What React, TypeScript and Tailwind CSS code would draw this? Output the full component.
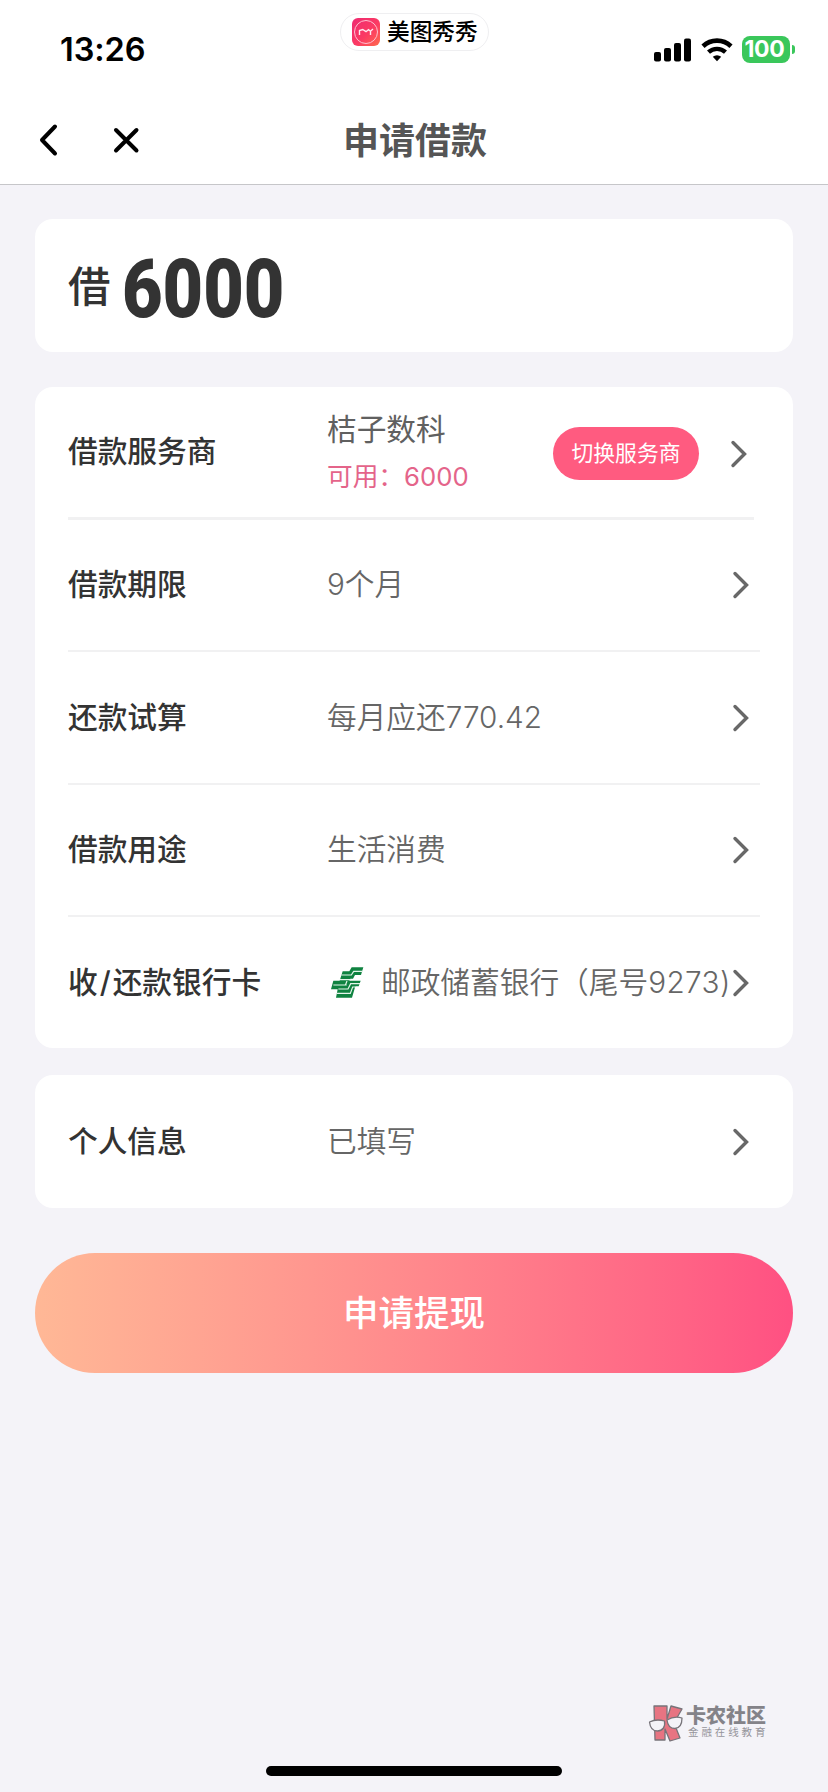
import type { ReactNode } from 'react';

const rows = [
  { label: '借款期限', value: '9个月', height: 'h-[132px]' },
  { label: '还款试算', value: '每月应还770.42', height: 'h-[133px]' },
  { label: '借款用途', value: '生活消费', height: 'h-[132px]' },
];

function Chevron() {
  return (
    <svg width="20" height="30" viewBox="0 0 20 30" fill="none" className="shrink-0">
      <path d="M4 3.5 15.5 15 4 26.5" stroke="#686868" strokeWidth="3.4" strokeLinecap="round" />
    </svg>
  );
}

function BankLogo() {
  return (
    <svg width="33" height="31" viewBox="0 0 99 93" fill="none">
      <path d="M35 13h20l7-12h35l-7 23H72l-6 11H58l-3 6h34l-6 17H73L63 92H15l5-25H0l7-26h19z" fill="#0f8240" />
      <path d="M96 13H68l-7 11H31M27 38h32" stroke="#e4f5ea" strokeWidth="3.500" />
      <path d="M7 54h40M87 50H59l-8 16H22M72 60h-7l-7 19H17M48 42l-5 13" stroke="#e4f5ea" strokeWidth="3.500" />
    </svg>
  );
}

function StatusBar() {
  return (
    <div className="relative flex h-[98px] items-center justify-between pl-[60px] pr-[33px] pt-px">
      <span className="pt-px text-[32.5px] font-semibold leading-none tracking-[-0.1px] text-black">13:26</span>

      <div className="absolute left-[340px] top-[13px] flex h-[38px] w-[149px] items-center rounded-full border border-[#efeff1] pl-[11px]">
        <svg width="28" height="28" viewBox="0 0 28 28" fill="none">
          <defs>
            <linearGradient id="mt" x1="0" y1="0" x2="1" y2="1">
              <stop offset="0" stopColor="#ee2a72" />
              <stop offset="0.55" stopColor="#fb3a63" />
              <stop offset="1" stopColor="#ff6a4d" />
            </linearGradient>
          </defs>
          <rect width="28" height="28" rx="6" fill="url(#mt)" />
          <circle cx="14" cy="14" r="11.5" stroke="#ffc0d0" />
          <path d="M7.500 17v-4.500l3.200-1 3.300 2.200 2.500-2 2 1.500 2.500-2.200M18.500 13v4" stroke="#ffeaf0" strokeWidth="1.400" />
        </svg>
        <span className="ml-[7px] whitespace-nowrap pt-px text-[22.7px] font-medium leading-none text-black">美图秀秀</span>
      </div>

      <div className="flex items-center">
        <svg width="38" height="24" viewBox="0 0 38 24" fill="#000">
          <rect x="0" y="14" width="7" height="9.500" rx="2" />
          <rect x="10" y="10" width="7" height="13.500" rx="2" />
          <rect x="20" y="5" width="7" height="18.500" rx="2" />
          <rect x="30" y="0.500" width="7" height="23" rx="2" />
        </svg>
        <svg width="32" height="24" viewBox="0 0 32 24" fill="none" stroke="#000" className="ml-[9px]">
          <path d="M2 8.200a20.500 20.500 0 0 1 28 0" strokeWidth="4.600" />
          <path d="M7.500 14.200a12.500 12.500 0 0 1 17 0" strokeWidth="4.400" />
          <path d="M11.800 18.800a6.200 6.200 0 0 1 8.400 0L16 23.200z" fill="#000" stroke="none" />
        </svg>
        <div className="ml-[9px] flex h-[27px] w-[48px] items-center justify-center rounded-[8px] bg-[#3ac75b] pr-[3px] text-[23px] font-bold leading-none tracking-[-0.3px] text-white">
          100
        </div>
        <div className="ml-[2px] h-[9px] w-[3px] rounded-r-full bg-[#3ac75b]" />
      </div>
    </div>
  );
}

function NavBar() {
  return (
    <div className="relative flex h-[87px] items-center justify-center border-b border-[#c6c6c9] pb-px">
      <svg width="110" height="40" viewBox="0 0 110 40" fill="none" stroke="#000" strokeWidth="4" strokeLinecap="round" strokeLinejoin="round" className="absolute left-[35px] top-[22px]">
        <path d="M20 6.500 7 20l13 13.500M81 10l20.500 20.500M101.500 10 81 30.500" />
      </svg>
      <h1 className="ml-[2px] text-[36px] font-semibold leading-none text-[#555]">申请借款</h1>
    </div>
  );
}

function Label({ children }: { children: ReactNode }) {
  return <span className="w-[259px] shrink-0 text-[29.7px] font-medium leading-none text-[#333]">{children}</span>;
}

function Value({ children }: { children: ReactNode }) {
  return <span className="whitespace-nowrap text-[29.7px] font-[350] leading-none text-[#666]">{children}</span>;
}

export default function App() {
  return (
    <div className="relative h-[1792px] w-[828px] overflow-hidden bg-[#f4f3f8] font-['Inter','Noto_Sans_CJK_SC',sans-serif]">
      <header className="bg-white">
        <StatusBar />
        <NavBar />
      </header>

      <main className="flex flex-col px-[35px] pt-[34px]">
        <section className="flex h-[133px] items-center rounded-[18px] bg-white pl-[33px]">
          <span className="pt-[3px] text-[42.5px] font-medium leading-none text-[#333]">借</span>
          <span className="ml-[11px] origin-left scale-x-[0.865] pt-[7px] font-['Roboto'] text-[81px] font-black leading-none text-[#333]">
            6000
          </span>
        </section>

        <section className="mt-[35px] h-[661px] rounded-[18px] bg-white pl-[33px]">
          <div className="flex h-[133px] w-[686px] items-center border-b-[3px] border-[#f1f1f2]">
            <Label>借款服务商</Label>
            <div className="flex w-[226px] flex-col gap-[19px] pt-px">
              <span className="text-[29.7px] leading-none text-[#606060]">桔子数科</span>
              <span className="text-[25.7px] leading-none text-[#e4648a]">可用：6000</span>
            </div>
            <button className="mt-[2px] h-[53px] w-[146px] rounded-full bg-[#ff5b80] pt-[2px] text-[21.8px] leading-none text-white">
              切换服务商
            </button>
            <div className="ml-[30px] mt-[3px]">
              <Chevron />
            </div>
          </div>

          {rows.map((row) => (
            <div key={row.label} className={`flex w-[692px] items-center border-b-2 border-[#f1f1f2] ${row.height}`}>
              <Label>{row.label}</Label>
              <Value>{row.value}</Value>
              <div className="ml-auto mr-[9px]">
                <Chevron />
              </div>
            </div>
          ))}

          <div className="flex h-[131px] w-[692px] items-center">
            <Label>
              收<span className="mx-[2px]">/</span>还款银行卡
            </Label>
            <div className="ml-[4px] mr-[17px] shrink-0">
              <BankLogo />
            </div>
            <Value>
              邮政储蓄银行（尾号<span className="tracking-[0.4px]">9273)</span>
            </Value>
            <div className="ml-auto mr-[9px]">
              <Chevron />
            </div>
          </div>
        </section>

        <section className="mt-[27px] flex h-[133px] items-center rounded-[18px] bg-white pl-[33px] pr-[42px]">
          <Label>个人信息</Label>
          <Value>已填写</Value>
          <div className="ml-auto">
            <Chevron />
          </div>
        </section>

        <button className="mt-[45px] h-[120px] rounded-full bg-linear-to-r from-[#ffb896] to-[#ff5082] pt-[2px] text-[35.5px] font-medium leading-none text-white">
          申请提现
        </button>
      </main>

      {/* watermark */}
      <div className="absolute left-[648px] top-[1704px] flex">
        <svg width="36" height="38" viewBox="0 0 36 38" strokeLinejoin="round">
          <path d="M6 2h13v13L23 2l11 3-8 14 6 15-10 3-5-12v11H7z" fill="#e77482" stroke="#77747a" strokeWidth="1.300" />
          <path d="M1.500 18c4-2 10-2.500 15-1 1 6-2 10-7 10-5 0-7.500-4-8-9zM19 16c5-3 10-3.500 15-2 0 6-2 10-7 10.500-5 0-7.500-4-8-8.500z" fill="#f4f3f8" stroke="#77747a" strokeWidth="1.300" />
        </svg>
        <div className="ml-[2px] flex flex-col">
          <span className="mt-[2px] text-[20px] font-black leading-none text-[#848389]">卡农社区</span>
          <span className="ml-[2px] mt-[2px] text-[10.5px] leading-none tracking-[2.9px] text-[#96959b]">金融在线教育</span>
        </div>
      </div>

      {/* home indicator */}
      <div className="absolute bottom-[16px] left-[266px] h-[10px] w-[296px] rounded-full bg-black" />
    </div>
  );
}
